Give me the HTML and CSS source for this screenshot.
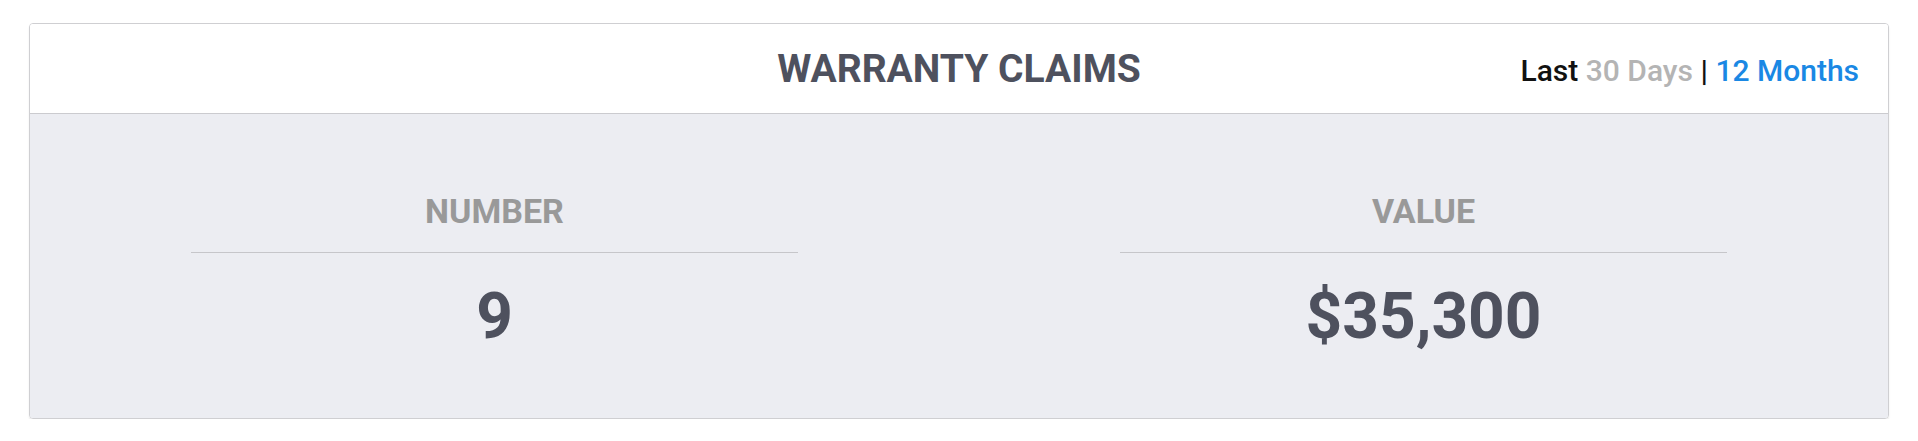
FILE: index.html
```html
<!DOCTYPE html>
<html>
	<head>
		<meta charset="utf-8">
		<title>Warranty Claims</title>
		<link rel="stylesheet" href="styles.css">
	</head>
	<body>
		<div class="card">
			<div class="card-head">
				<span></span>
				<h2 class="title">WARRANTY CLAIMS</h2>
				<p class="range">
					<span class="last">Last</span>
					<span class="off">30 Days</span>
					<span class="sep">|</span>
					<span class="on">12 Months</span>
				</p>
			</div>
			<div class="card-body">
				<div class="stat">
					<div class="stat-inner">
						<p class="label">NUMBER</p>
						<p class="value">9</p>
					</div>
				</div>
				<div class="stat">
					<div class="stat-inner">
						<p class="label">VALUE</p>
						<p class="value">$35,300</p>
					</div>
				</div>
			</div>
		</div>
	</body>
</html>
```

FILE: styles.css
```css
body, html{
	background-color: #ffffff;
	margin: 0;
	font-family: Roboto, "Liberation Sans", sans-serif;
}
.card{
	margin: 23px 29px 0 29px;
	border: 1px solid #cfcfd2;
	border-radius: 4px;
	box-shadow: 0 2px 2px rgba(0,0,0,0.08);
	overflow: hidden;
}
.card-head{
	display: grid;
	grid-template-columns: 1fr auto 1fr;
	align-items: center;
	height: 89px;
	background-color: #ffffff;
	border-bottom: 1px solid #cbcbcf;
}
.title{
	margin: 0;
	font-size: 39px;
	font-weight: 700;
	color: #4e515e;
}
.range{
	justify-self: end;
	margin: 0;
	padding: 3px 29px 0 0;
	font-size: 30px;
	font-weight: 500;
}
.last{
	color: #111111;
}
.off{
	color: #b4b4b4;
}
.sep{
	color: #111111;
}
.on{
	color: #1a88e4;
}
.card-body{
	display: grid;
	grid-template-columns: 1fr 1fr;
	background-color: #ecedf2;
	padding: 77px 0 63px 0;
}
.stat{
	display: flex;
	justify-content: center;
}
.stat-inner{
	width: 607px;
	text-align: center;
}
.label{
	margin: 0;
	padding-bottom: 21px;
	border-bottom: 1px solid #c6c6ca;
	font-size: 34px;
	line-height: 40px;
	font-weight: 700;
	color: #999999;
}
.value{
	margin: 26px 0 0 0;
	font-size: 64px;
	line-height: 76px;
	font-weight: 700;
	color: #4e515e;
}
```
